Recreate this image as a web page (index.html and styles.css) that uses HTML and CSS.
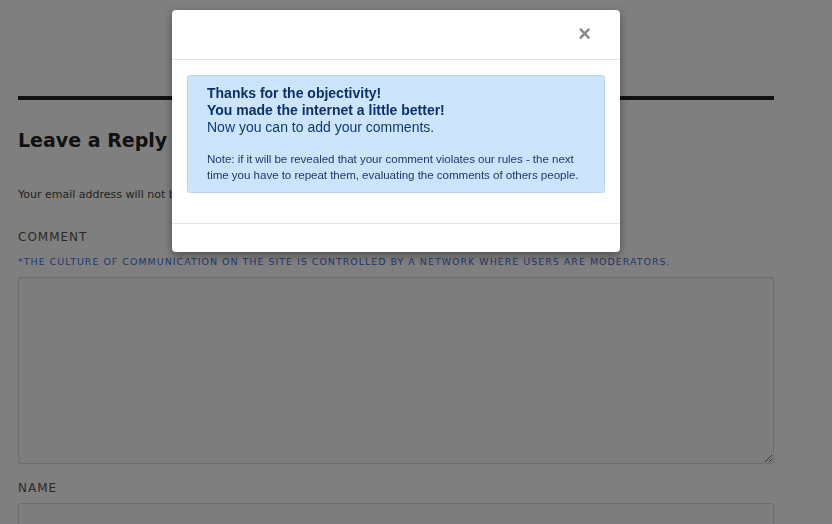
FILE: index.html
```html
<!DOCTYPE html>
<html lang="en">
<head>
    <meta charset="UTF-8">
    <meta name="viewport" content="width=device-width, initial-scale=1.0">
    <title>Leave a Reply</title>
    <link rel="stylesheet" href="styles.css">
</head>
<body>
    <div class="page">
        <hr class="divider">
        <h3 class="reply-title">Leave a Reply</h3>
        <p class="notes">Your email address will not be published. Required fields are marked *</p>

        <label class="field-label" for="comment">Comment</label>
        <p class="culture">*The culture of communication on the site is controlled by a network where users are moderators.</p>
        <textarea id="comment" class="comment-box"></textarea>

        <label class="field-label name-label" for="author">Name</label>
        <input type="text" id="author" class="name-box">
    </div>

    <div class="backdrop"></div>

    <div class="modal">
        <div class="modal-header">
            <button class="close">&times;</button>
        </div>
        <div class="modal-body">
            <div class="alert">
                <b>Thanks for the objectivity!<br>You made the internet a little better!</b><br>
                Now you can to add your comments.
                <p class="alert-note">Note: if it will be revealed that your comment violates our rules - the next time you have to repeat them, evaluating the comments of others people.</p>
            </div>
        </div>
        <div class="modal-footer"></div>
    </div>
</body>
</html>
```

FILE: styles.css
```css
body {
    margin: 0;
    background-color: #fff;
    font-family: "DejaVu Sans", "Open Sans", sans-serif;
    color: #222;
    overflow: hidden;
}
.page {
    width: 756px;
    margin-left: 18px;
    padding-top: 96px;
}
.divider {
    border: 0;
    height: 4px;
    margin: 0;
    background-color: #222;
}
.reply-title {
    font-size: 19px;
    font-weight: bold;
    margin: 27px 0 0;
    line-height: 26px;
    color: #222;
}
.notes {
    font-size: 11px;
    color: #444;
    margin: 34px 0 0;
    line-height: 16px;
}
.field-label {
    display: block;
    font-size: 12px;
    letter-spacing: 1px;
    text-transform: uppercase;
    color: #555;
    margin-top: 26px;
    line-height: 16px;
}
.culture {
    font-size: 9.5px;
    letter-spacing: 0.98px;
    text-transform: uppercase;
    color: #4a6fd6;
    margin: 11px 0 0;
    line-height: 12px;
    white-space: nowrap;
}
.comment-box {
    display: block;
    box-sizing: border-box;
    width: 756px;
    height: 187px;
    margin-top: 9px;
    border: 1px solid #ddd;
    border-radius: 2px;
    background-color: #fafafa;
}
.name-label {
    margin-top: 16px;
}
.name-box {
    display: block;
    box-sizing: border-box;
    width: 756px;
    height: 40px;
    margin-top: 7px;
    border: 1px solid #ddd;
    border-radius: 2px;
    background-color: #fafafa;
}
.backdrop {
    position: fixed;
    inset: 0;
    background-color: rgba(0, 0, 0, 0.5);
}
.modal {
    position: absolute;
    top: 10px;
    left: 172px;
    width: 448px;
    background-color: #fff;
    border-radius: 4px;
    box-shadow: 0 3px 9px rgba(0, 0, 0, 0.4);
    font-family: "Liberation Sans", Arial, sans-serif;
}
.modal-header {
    height: 49px;
    border-bottom: 1px solid #e5e5e5;
    display: flex;
    justify-content: flex-end;
    align-items: center;
    padding-right: 29px;
}
.close {
    all: unset;
    font-size: 22px;
    font-weight: bold;
    color: #888;
    line-height: 20px;
    margin-top: -2px;
}
.modal-body {
    padding: 15px;
}
.alert {
    background-color: #cce5fc;
    border: 1px solid #b9d8f5;
    border-radius: 3px;
    padding: 9px 19px 9px 19px;
    color: #0b3a7a;
    font-size: 14px;
    line-height: 17px;
    margin-bottom: 15px;
}
.alert b {
    color: #0d2f6b;
}
.alert-note {
    font-size: 11.6px;
    letter-spacing: -0.05px;
    line-height: 16px;
    margin: 15px 0 0;
    color: #1d3a6b;
}
.modal-footer {
    height: 28px;
    border-top: 1px solid #e5e5e5;
}
```
